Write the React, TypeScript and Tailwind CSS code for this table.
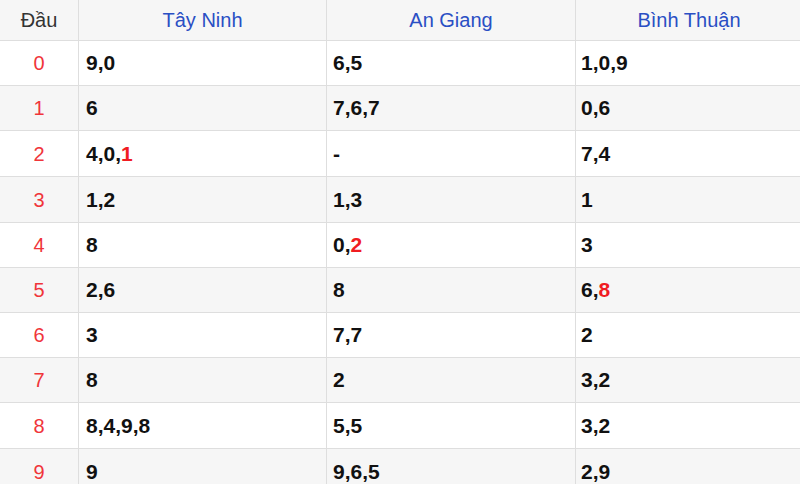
type Cell = { text: string; hot?: string };

const rows: { head: string; h: string; cells: Cell[] }[] = [
  { head: "0", h: "h-[45px]", cells: [{ text: "9,0" }, { text: "6,5" }, { text: "1,0,9" }] },
  { head: "1", h: "h-[45px]", cells: [{ text: "6" }, { text: "7,6,7" }, { text: "0,6" }] },
  { head: "2", h: "h-[46px]", cells: [{ text: "4,0,", hot: "1" }, { text: "-" }, { text: "7,4" }] },
  { head: "3", h: "h-[46px]", cells: [{ text: "1,2" }, { text: "1,3" }, { text: "1" }] },
  { head: "4", h: "h-[45px]", cells: [{ text: "8" }, { text: "0,", hot: "2" }, { text: "3" }] },
  { head: "5", h: "h-[45px]", cells: [{ text: "2,6" }, { text: "8" }, { text: "6,", hot: "8" }] },
  { head: "6", h: "h-[45px]", cells: [{ text: "3" }, { text: "7,7" }, { text: "2" }] },
  { head: "7", h: "h-[45px]", cells: [{ text: "8" }, { text: "2" }, { text: "3,2" }] },
  { head: "8", h: "h-[46px]", cells: [{ text: "8,4,9,8" }, { text: "5,5" }, { text: "3,2" }] },
  { head: "9", h: "h-[46px]", cells: [{ text: "9" }, { text: "9,6,5" }, { text: "2,9" }] },
];

const cols = "grid grid-cols-[79px_248px_249px_1fr]";

export default function App() {
  return (
    <div className="w-[800px] h-[484px] overflow-hidden bg-white font-['Liberation_Sans',Arial,sans-serif]">
      <div className={`${cols} h-[41px] bg-[#f6f6f6] border-b border-[#dedede] text-[20px]`}>
        <div className="flex items-center justify-center border-r border-[#dedede] text-[#333]">Đầu</div>
        <div className="flex items-center justify-center border-r border-[#dedede] text-[#2a4fc4]">Tây Ninh</div>
        <div className="flex items-center justify-center border-r border-[#dedede] text-[#2a4fc4]">An Giang</div>
        <div className="flex items-center justify-center pl-[2px] text-[#2a4fc4]">Bình Thuận</div>
      </div>
      {rows.map((r, i) => (
        <div
          key={r.head}
          className={`${cols} ${r.h} border-b border-[#dedede] ${i % 2 === 1 ? "bg-[#f6f6f6]" : "bg-white"}`}
        >
          <div className="flex items-center justify-center border-r border-[#dedede] text-[20px] text-[#f0353a]">
            {r.head}
          </div>
          {r.cells.map((c, j) => (
            <div
              key={j}
              className={`flex items-center ${j === 0 ? "pl-[7px]" : j === 1 ? "pl-[6px]" : "pl-[5px]"} text-[21px] font-bold text-[#111] ${j < 2 ? "border-r border-[#dedede]" : ""}`}
            >
              {c.text}
              {c.hot && <span className="text-[#f01c22]">{c.hot}</span>}
            </div>
          ))}
        </div>
      ))}
    </div>
  );
}
